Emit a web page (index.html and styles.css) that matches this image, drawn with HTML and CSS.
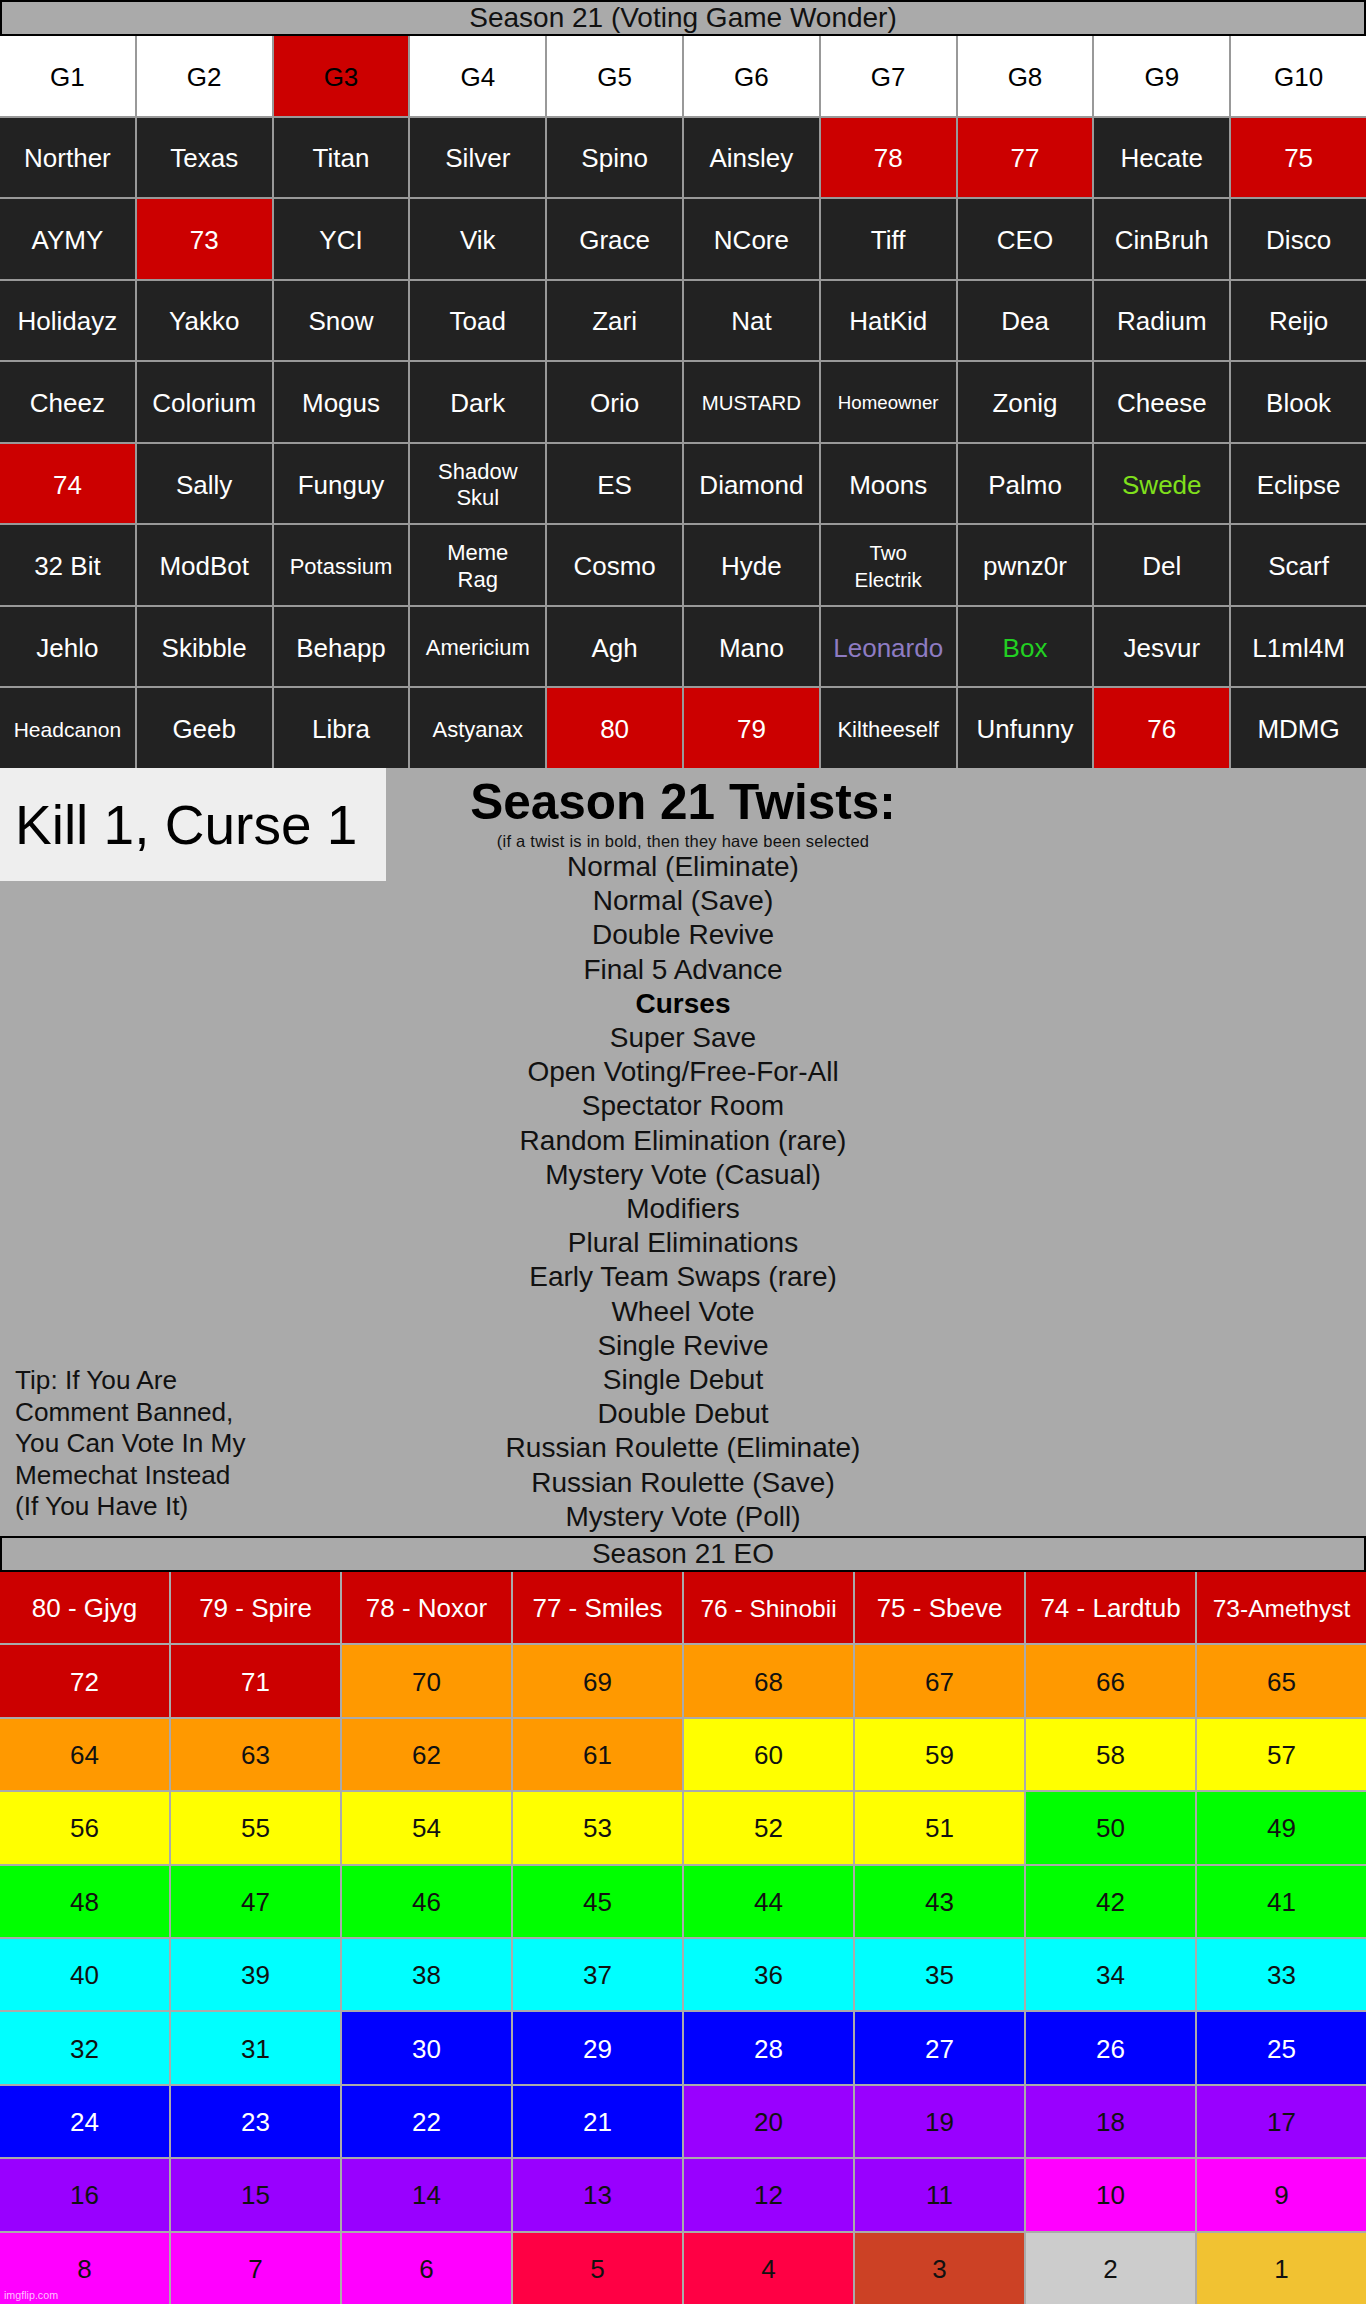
FILE: index.html
```html
<!DOCTYPE html>
<html>
<head>
<meta charset="utf-8">
<title>Season 21 (Voting Game Wonder)</title>
<link rel="stylesheet" href="styles.css">
</head>
<body>
<div class="page">
  <div class="bar">Season 21 (Voting Game Wonder)</div>
  <div class="g10">
    <div class="h">G1</div><div class="h">G2</div><div class="h x">G3</div><div class="h">G4</div><div class="h">G5</div><div class="h">G6</div><div class="h">G7</div><div class="h">G8</div><div class="h">G9</div><div class="h">G10</div>
    <div>Norther</div><div>Texas</div><div>Titan</div><div>Silver</div><div>Spino</div><div>Ainsley</div><div class="x">78</div><div class="x">77</div><div>Hecate</div><div class="x">75</div>
    <div>AYMY</div><div class="x">73</div><div>YCI</div><div>Vik</div><div>Grace</div><div>NCore</div><div>Tiff</div><div>CEO</div><div>CinBruh</div><div>Disco</div>
    <div>Holidayz</div><div>Yakko</div><div>Snow</div><div>Toad</div><div>Zari</div><div>Nat</div><div>HatKid</div><div>Dea</div><div>Radium</div><div>Reijo</div>
    <div>Cheez</div><div>Colorium</div><div>Mogus</div><div>Dark</div><div>Orio</div><div class="s20">MUSTARD</div><div class="s19">Homeowner</div><div>Zonig</div><div>Cheese</div><div>Blook</div>
    <div class="x">74</div><div>Sally</div><div>Funguy</div><div class="two s22">Shadow<br>Skul</div><div>ES</div><div>Diamond</div><div>Moons</div><div>Palmo</div><div class="lime">Swede</div><div>Eclipse</div>
    <div>32 Bit</div><div>ModBot</div><div class="s22">Potassium</div><div class="two s22">Meme<br>Rag</div><div>Cosmo</div><div>Hyde</div><div class="two s20">Two<br>Electrik</div><div>pwnz0r</div><div>Del</div><div>Scarf</div>
    <div>Jehlo</div><div>Skibble</div><div>Behapp</div><div class="s22">Americium</div><div>Agh</div><div>Mano</div><div class="lav">Leonardo</div><div class="grn">Box</div><div>Jesvur</div><div>L1ml4M</div>
    <div class="s21">Headcanon</div><div>Geeb</div><div>Libra</div><div class="s22">Astyanax</div><div class="x">80</div><div class="x">79</div><div class="s22">Kiltheeself</div><div>Unfunny</div><div class="x">76</div><div>MDMG</div>
  </div>
  <div class="mid">
    <div class="left">
      <div class="kill">Kill 1, Curse 1</div>
      <div class="tip">Tip: If You Are<br>Comment Banned,<br>You Can Vote In My<br>Memechat Instead<br>(If You Have It)</div>
    </div>
    <div class="center">
      <h1 class="ttl">Season 21 Twists:</h1>
      <p class="sub">(if a twist is in bold, then they have been selected</p>
      <div class="list">
        <div>Normal (Eliminate)</div>
        <div>Normal (Save)</div>
        <div>Double Revive</div>
        <div>Final 5 Advance</div>
        <div class="sel">Curses</div>
        <div>Super Save</div>
        <div>Open Voting/Free-For-All</div>
        <div>Spectator Room</div>
        <div>Random Elimination (rare)</div>
        <div>Mystery Vote (Casual)</div>
        <div>Modifiers</div>
        <div>Plural Eliminations</div>
        <div>Early Team Swaps (rare)</div>
        <div>Wheel Vote</div>
        <div>Single Revive</div>
        <div>Single Debut</div>
        <div>Double Debut</div>
        <div>Russian Roulette (Eliminate)</div>
        <div>Russian Roulette (Save)</div>
        <div>Mystery Vote (Poll)</div>
      </div>
    </div>
    <div class="right"></div>
  </div>
  <div class="bar">Season 21 EO</div>
  <div class="g8">
    <div class="r">80 - Gjyg</div><div class="r">79 - Spire</div><div class="r">78 - Noxor</div><div class="r">77 - Smiles</div><div class="r s24">76 - Shinobii</div><div class="r">75 - Sbeve</div><div class="r">74 - Lardtub</div><div class="r s24">73-Amethyst</div>
    <div class="r">72</div><div class="r">71</div><div class="o">70</div><div class="o">69</div><div class="o">68</div><div class="o">67</div><div class="o">66</div><div class="o">65</div>
    <div class="o">64</div><div class="o">63</div><div class="o">62</div><div class="o">61</div><div class="y">60</div><div class="y">59</div><div class="y">58</div><div class="y">57</div>
    <div class="y">56</div><div class="y">55</div><div class="y">54</div><div class="y">53</div><div class="y">52</div><div class="y">51</div><div class="g">50</div><div class="g">49</div>
    <div class="g">48</div><div class="g">47</div><div class="g">46</div><div class="g">45</div><div class="g">44</div><div class="g">43</div><div class="g">42</div><div class="g">41</div>
    <div class="c">40</div><div class="c">39</div><div class="c">38</div><div class="c">37</div><div class="c">36</div><div class="c">35</div><div class="c">34</div><div class="c">33</div>
    <div class="c">32</div><div class="c">31</div><div class="b">30</div><div class="b">29</div><div class="b">28</div><div class="b">27</div><div class="b">26</div><div class="b">25</div>
    <div class="b">24</div><div class="b">23</div><div class="b">22</div><div class="b">21</div><div class="p">20</div><div class="p">19</div><div class="p">18</div><div class="p">17</div>
    <div class="p">16</div><div class="p">15</div><div class="p">14</div><div class="p">13</div><div class="p">12</div><div class="p">11</div><div class="m">10</div><div class="m">9</div>
    <div class="m">8</div><div class="m">7</div><div class="m">6</div><div class="rs">5</div><div class="rs">4</div><div class="rb">3</div><div class="gr">2</div><div class="au">1</div>
  </div>
  <span class="watermark">imgflip.com</span>
</div>
</body>
</html>
```
FILE: styles.css
```css
html, body {
  margin: 0;
  padding: 0;
}
body {
  background: #aaaaaa;
  font-family: "Liberation Sans", Arial, sans-serif;
}
.page {
  position: relative;
  width: 1366px;
  height: 2304px;
  overflow: hidden;
}
.bar {
  height: 36px;
  box-sizing: border-box;
  border: 2px solid #000;
  background: #aaaaaa;
  font-size: 28px;
  line-height: 32px;
  text-align: center;
  color: #111;
}

/* top 10-column grid */
.g10 {
  display: grid;
  grid-template-columns: repeat(10, 1fr);
  grid-template-rows: repeat(9, 1fr);
  gap: 2px;
  height: 732px;
  background: #999;
}
.g10 > div {
  display: flex;
  align-items: center;
  justify-content: center;
  box-sizing: border-box;
  padding-top: 3px;
  text-align: center;
  background: #222;
  color: #fff;
  font-size: 26px;
}
.g10 > .h {
  background: #fff;
  color: #000;
}
.g10 > .x {
  background: #cc0000;
}
.g10 > .h.x {
  color: #000;
}
.g10 > .s19 { font-size: 18.7px; }
.g10 > .s20 { font-size: 20.4px; }
.g10 > .s21 { font-size: 21px; }
.g10 > .s22 { font-size: 22px; }
.g10 > .two { line-height: 26.5px; }
.g10 > .two.s20 { font-size: 20.5px; }
.g10 > .lime { color: #80e01c; }
.g10 > .lav { color: #8e7cc3; }
.g10 > .grn { color: #22d022; }

/* middle section */
.mid {
  height: 768px;
  display: grid;
  grid-template-columns: 1fr auto 1fr;
  background: #aaaaaa;
}
.left {
  display: flex;
  flex-direction: column;
  justify-content: space-between;
}
.kill {
  width: 386px;
  height: 113px;
  box-sizing: border-box;
  padding: 4px 0 0 15px;
  line-height: 106px;
  font-size: 55px;
  background: #eeeeee;
  color: #000;
  white-space: nowrap;
}
.tip {
  padding: 0 0 13px 15px;
  font-size: 26.2px;
  line-height: 31.6px;
  color: #111;
  white-space: nowrap;
}
.center {
  padding-top: 5px;
  text-align: center;
  color: #000;
}
.ttl {
  margin: 0;
  font-size: 49.5px;
  font-weight: bold;
  line-height: 57px;
}
.sub {
  margin: 3px 0 0;
  font-size: 16.5px;
  line-height: 17px;
  letter-spacing: 0.25px;
  color: #111;
}
.list {
  font-size: 28px;
  line-height: 34.2px;
  color: #111;
}
.list .sel {
  font-weight: bold;
  color: #000;
}

/* bottom 8-column grid */
.g8 {
  display: grid;
  grid-template-columns: repeat(8, 1fr);
  grid-template-rows: repeat(10, 1fr);
  gap: 2px;
  height: 732px;
  background: #aaaaaa;
}
.g8 > div {
  display: flex;
  align-items: center;
  justify-content: center;
  box-sizing: border-box;
  padding-top: 2px;
  text-align: center;
  font-size: 26px;
  color: #111;
  white-space: nowrap;
}
.g8 > .s24 { font-size: 24.5px; }
.g8 > .r { background: #cc0000; color: #fff; }
.g8 > .o { background: #ff9900; }
.g8 > .y { background: #ffff00; }
.g8 > .g { background: #00ff00; }
.g8 > .c { background: #00ffff; }
.g8 > .b { background: #0000ff; color: #fff; }
.g8 > .p { background: #9900ff; }
.g8 > .m { background: #ff00ff; }
.g8 > .rs { background: #ff0044; }
.g8 > .rb { background: #cc4125; }
.g8 > .gr { background: #cccccc; }
.g8 > .au { background: #f1c232; }

.watermark {
  position: absolute;
  left: 4px;
  bottom: 3px;
  font-size: 10.7px;
  line-height: 12px;
  color: rgba(255, 255, 255, 0.75);
}
```
